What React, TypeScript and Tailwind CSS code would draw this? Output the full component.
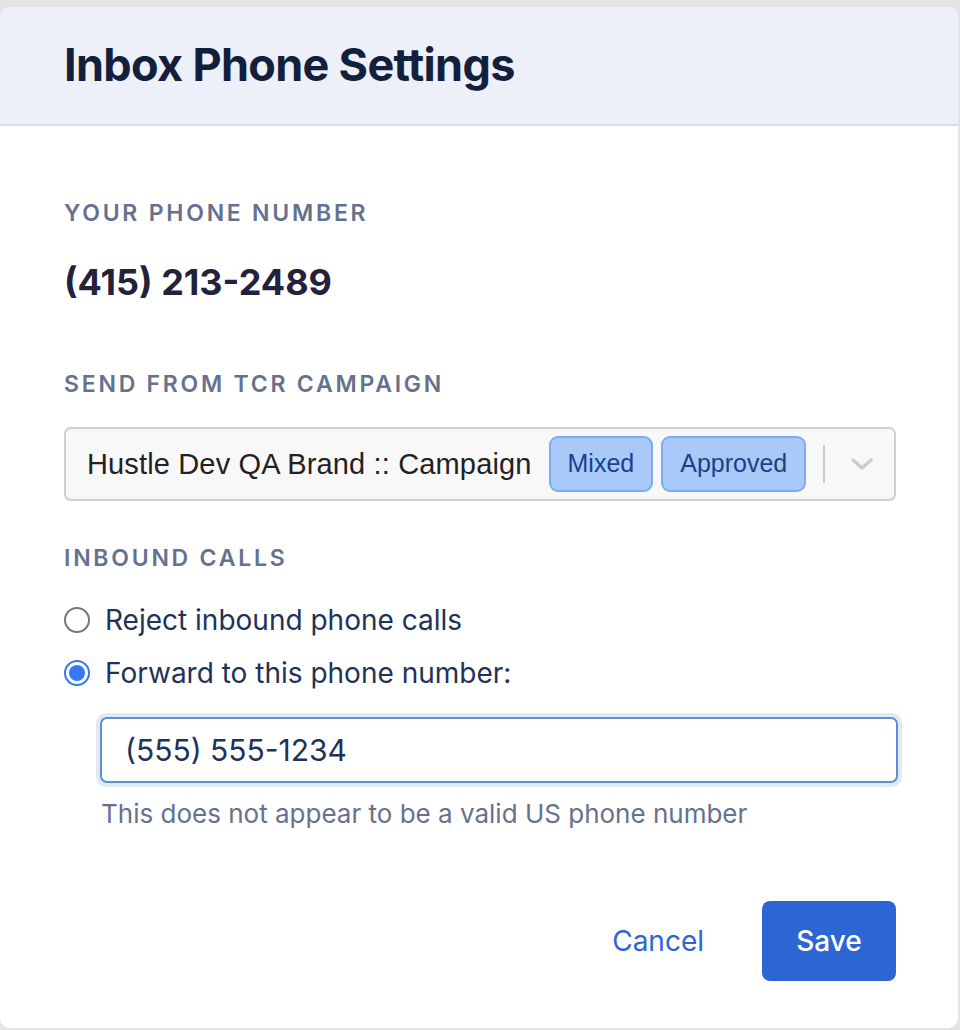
import React from "react";

const Label = ({ children }: { children: React.ReactNode }) => (
  <p className="text-[23px] font-semibold tracking-[0.12em] text-[#65718e] leading-none uppercase">
    {children}
  </p>
);

const Radio = ({ checked, label }: { checked?: boolean; label: string }) => (
  <label className="flex items-center gap-[15px]">
    {checked ? (
      <span className="w-[26px] h-[26px] rounded-full border-2 border-[#3478f6] flex items-center justify-center">
        <span className="w-[16px] h-[16px] rounded-full bg-[#3478f6]" />
      </span>
    ) : (
      <span className="w-[26px] h-[26px] rounded-full border-2 border-[#767676] bg-white" />
    )}
    <span className="text-[28px] text-[#1f3257] leading-none">{label}</span>
  </label>
);

const Badge = ({ children }: { children: React.ReactNode }) => (
  <span
    className="h-[56px] px-[17px] flex items-center bg-[#a9c9f9] border-2 border-[#7eaaf0] rounded-[9px] text-[25px] text-[#1d3f8a]"
    style={{ fontFamily: "'Liberation Sans', Arial, sans-serif" }}
  >
    {children}
  </span>
);

export default function App() {
  return (
    <div
      className="w-[960px] h-[1030px] bg-[#e4e4e4] pt-[7px] pr-[2px] pb-[2px]"
      style={{ fontFamily: "Inter, 'Noto Sans', sans-serif" }}
    >
      <div className="h-full bg-white rounded-[10px] overflow-hidden flex flex-col">
        {/* header */}
        <div className="h-[119px] bg-[#edf0f8] border-b-2 border-[#d8dde6] flex items-center px-[64px]">
          <h1 className="text-[45px] font-bold text-[#141f3d] tracking-[-0.015em] leading-none pb-[2px]">
            Inbox Phone Settings
          </h1>
        </div>

        {/* body */}
        <div className="flex flex-col px-[64px] pt-[76px]">
          <Label>Your phone number</Label>
          <p className="mt-[39px] text-[36px] font-bold text-[#23213b] leading-none">
            (415) 213-2489
          </p>

          <div className="mt-[73px]">
            <Label>Send from TCR campaign</Label>
          </div>
          <div className="mt-[31px] h-[74px] w-[832px] bg-[#f8f8f8] border-2 border-[#cfcfcf] rounded-[7px] flex items-center pl-[21px] pr-[14px]">
            <span
              className="text-[29px] text-[#222] leading-none tracking-[0.005em]"
              style={{ fontFamily: "'Liberation Sans', Arial, sans-serif" }}
            >
              Hustle Dev QA Brand :: Campaign
            </span>
            <div className="flex gap-[8px] ml-[17px]">
              <Badge>Mixed</Badge>
              <Badge>Approved</Badge>
            </div>
            <span className="ml-[17px] w-[2px] h-[38px] bg-[#cccccc]" />
            <svg
              className="ml-[24px]"
              width="26"
              height="16"
              viewBox="0 0 26 16"
              fill="none"
              stroke="#cccccc"
              strokeWidth="3.5"
              strokeLinecap="round"
              strokeLinejoin="round"
            >
              <polyline points="4,4 13,12 22,4" />
            </svg>
          </div>

          <div className="mt-[46px]">
            <Label>Inbound calls</Label>
          </div>
          <div className="mt-[36px] flex flex-col gap-[25px]">
            <Radio label="Reject inbound phone calls" />
            <Radio checked label="Forward to this phone number:" />
          </div>

          <div className="mt-[26px] ml-[32px] w-[806px] p-[4px] bg-[#e2e9f6] rounded-[10px]">
            <div className="h-[66px] bg-white border-2 border-[#5d90d2] rounded-[7px] flex items-center px-[23px]">
              <span className="text-[30px] text-[#1f3257] leading-none">(555) 555-1234</span>
            </div>
          </div>
          <p className="mt-[14px] ml-[37px] text-[26px] text-[#65718e] leading-none">
            This does not appear to be a valid US phone number
          </p>

          <div className="mt-[74px] flex items-center justify-end gap-[58px] w-[832px]">
            <button className="text-[28px] text-[#2c66d2] leading-none">Cancel</button>
            <button className="w-[134px] h-[80px] rounded-[8px] bg-[#2c66d2] text-white text-[28px] font-medium leading-none">
              Save
            </button>
          </div>
        </div>
      </div>
    </div>
  );
}
